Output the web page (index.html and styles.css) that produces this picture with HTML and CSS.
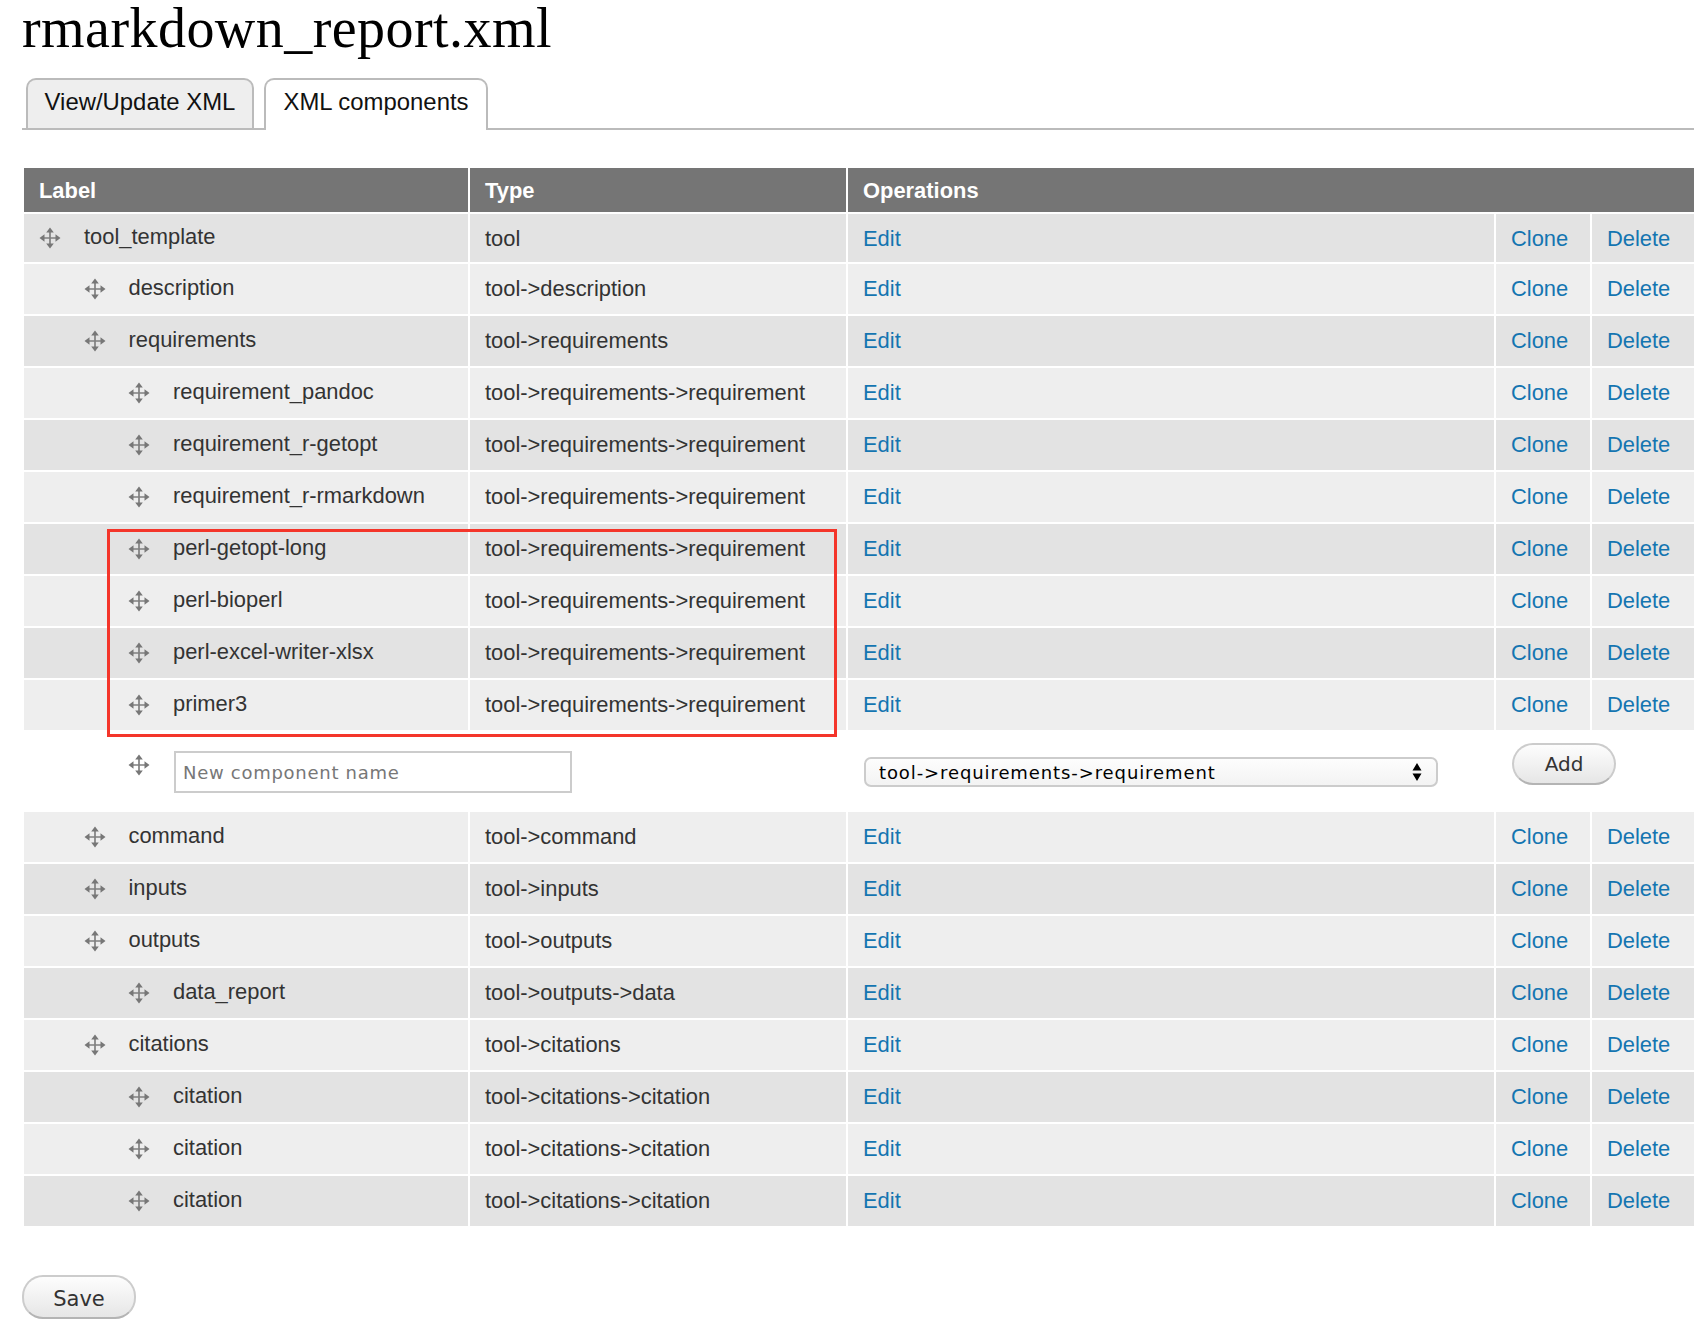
FILE: index.html
```html
<!DOCTYPE html>
<html lang="en">
<head>
  <meta charset="UTF-8" />
  <title>rmarkdown_report.xml</title>
  <link rel="stylesheet" href="styles.css">
</head>
<body>
  <svg class="defs" width="0" height="0">
    <symbol id="move" viewBox="0 0 22 22">
      <path d="M11 3v16M3 11h16" fill="none" stroke="#808080" stroke-width="1.7"/>
      <path d="M11 0.5l3.800 5h-7.600zM11 21.500l3.800-5h-7.600zM0.500 11l5-3.800v7.600zM21.500 11l-5-3.800v7.600z" fill="#777"/>
    </symbol>
  </svg>

  <h1>rmarkdown_report.xml</h1>

  <ul class="tabs">
    <li><a href="#">View/Update XML</a></li>
    <li class="active"><a href="#">XML components</a></li>
  </ul>

  <table class="components">
    <colgroup>
      <col class="col-label">
      <col class="col-type">
      <col>
      <col class="col-clone">
      <col class="col-delete">
    </colgroup>
    <thead>
      <tr><th>Label</th><th>Type</th><th colspan="3">Operations</th></tr>
    </thead>
    <tbody>
      <tr class="dark first">
        <td><div class="label"><svg class="move"><use href="#move"/></svg><span>tool_template</span></div></td>
        <td>tool</td><td><a href="#">Edit</a></td><td><a href="#">Clone</a></td><td><a href="#">Delete</a></td>
      </tr>
      <tr>
        <td><div class="label lvl1"><svg class="move"><use href="#move"/></svg><span>description</span></div></td>
        <td>tool-&gt;description</td><td><a href="#">Edit</a></td><td><a href="#">Clone</a></td><td><a href="#">Delete</a></td>
      </tr>
      <tr class="dark">
        <td><div class="label lvl1"><svg class="move"><use href="#move"/></svg><span>requirements</span></div></td>
        <td>tool-&gt;requirements</td><td><a href="#">Edit</a></td><td><a href="#">Clone</a></td><td><a href="#">Delete</a></td>
      </tr>
      <tr>
        <td><div class="label lvl2"><svg class="move"><use href="#move"/></svg><span>requirement_pandoc</span></div></td>
        <td>tool-&gt;requirements-&gt;requirement</td><td><a href="#">Edit</a></td><td><a href="#">Clone</a></td><td><a href="#">Delete</a></td>
      </tr>
      <tr class="dark">
        <td><div class="label lvl2"><svg class="move"><use href="#move"/></svg><span>requirement_r-getopt</span></div></td>
        <td>tool-&gt;requirements-&gt;requirement</td><td><a href="#">Edit</a></td><td><a href="#">Clone</a></td><td><a href="#">Delete</a></td>
      </tr>
      <tr>
        <td><div class="label lvl2"><svg class="move"><use href="#move"/></svg><span>requirement_r-rmarkdown</span></div></td>
        <td>tool-&gt;requirements-&gt;requirement</td><td><a href="#">Edit</a></td><td><a href="#">Clone</a></td><td><a href="#">Delete</a></td>
      </tr>
      <tr class="dark">
        <td><div class="label lvl2"><svg class="move"><use href="#move"/></svg><span>perl-getopt-long</span></div></td>
        <td>tool-&gt;requirements-&gt;requirement</td><td><a href="#">Edit</a></td><td><a href="#">Clone</a></td><td><a href="#">Delete</a></td>
      </tr>
      <tr>
        <td><div class="label lvl2"><svg class="move"><use href="#move"/></svg><span>perl-bioperl</span></div></td>
        <td>tool-&gt;requirements-&gt;requirement</td><td><a href="#">Edit</a></td><td><a href="#">Clone</a></td><td><a href="#">Delete</a></td>
      </tr>
      <tr class="dark">
        <td><div class="label lvl2"><svg class="move"><use href="#move"/></svg><span>perl-excel-writer-xlsx</span></div></td>
        <td>tool-&gt;requirements-&gt;requirement</td><td><a href="#">Edit</a></td><td><a href="#">Clone</a></td><td><a href="#">Delete</a></td>
      </tr>
      <tr>
        <td><div class="label lvl2"><svg class="move"><use href="#move"/></svg><span>primer3</span></div></td>
        <td>tool-&gt;requirements-&gt;requirement</td><td><a href="#">Edit</a></td><td><a href="#">Clone</a></td><td><a href="#">Delete</a></td>
      </tr>
      <tr class="add-row">
        <td colspan="2">
          <div class="label lvl2 add-label"><svg class="move"><use href="#move"/></svg><input type="text" placeholder="New component name"></div>
        </td>
        <td>
          <div class="select-wrap">
            <select><option>tool-&gt;requirements-&gt;requirement</option></select>
            <svg class="select-arrows" viewBox="0 0 10 18"><path d="M5 0l4.500 7.500h-9zM5 18l4.500-7.500h-9z"/></svg>
          </div>
        </td>
        <td colspan="2"><button class="btn btn-add">Add</button></td>
      </tr>
      <tr>
        <td><div class="label lvl1"><svg class="move"><use href="#move"/></svg><span>command</span></div></td>
        <td>tool-&gt;command</td><td><a href="#">Edit</a></td><td><a href="#">Clone</a></td><td><a href="#">Delete</a></td>
      </tr>
      <tr class="dark">
        <td><div class="label lvl1"><svg class="move"><use href="#move"/></svg><span>inputs</span></div></td>
        <td>tool-&gt;inputs</td><td><a href="#">Edit</a></td><td><a href="#">Clone</a></td><td><a href="#">Delete</a></td>
      </tr>
      <tr>
        <td><div class="label lvl1"><svg class="move"><use href="#move"/></svg><span>outputs</span></div></td>
        <td>tool-&gt;outputs</td><td><a href="#">Edit</a></td><td><a href="#">Clone</a></td><td><a href="#">Delete</a></td>
      </tr>
      <tr class="dark">
        <td><div class="label lvl2"><svg class="move"><use href="#move"/></svg><span>data_report</span></div></td>
        <td>tool-&gt;outputs-&gt;data</td><td><a href="#">Edit</a></td><td><a href="#">Clone</a></td><td><a href="#">Delete</a></td>
      </tr>
      <tr>
        <td><div class="label lvl1"><svg class="move"><use href="#move"/></svg><span>citations</span></div></td>
        <td>tool-&gt;citations</td><td><a href="#">Edit</a></td><td><a href="#">Clone</a></td><td><a href="#">Delete</a></td>
      </tr>
      <tr class="dark">
        <td><div class="label lvl2"><svg class="move"><use href="#move"/></svg><span>citation</span></div></td>
        <td>tool-&gt;citations-&gt;citation</td><td><a href="#">Edit</a></td><td><a href="#">Clone</a></td><td><a href="#">Delete</a></td>
      </tr>
      <tr>
        <td><div class="label lvl2"><svg class="move"><use href="#move"/></svg><span>citation</span></div></td>
        <td>tool-&gt;citations-&gt;citation</td><td><a href="#">Edit</a></td><td><a href="#">Clone</a></td><td><a href="#">Delete</a></td>
      </tr>
      <tr class="dark">
        <td><div class="label lvl2"><svg class="move"><use href="#move"/></svg><span>citation</span></div></td>
        <td>tool-&gt;citations-&gt;citation</td><td><a href="#">Edit</a></td><td><a href="#">Clone</a></td><td><a href="#">Delete</a></td>
      </tr>
    </tbody>
  </table>

  <div class="highlight"></div>

  <button class="btn btn-save">Save</button>
</body>
</html>
```

FILE: styles.css
```css
/* Base */
* {
  box-sizing: border-box;
}

html, body {
  margin: 0;
  padding: 0;
}

body {
  position: relative;
  height: 1328px;
  overflow: hidden;
  background: #fff;
  padding: 0 10px 0 22px;
  font-family: 'Liberation Sans', Arial, sans-serif;
  font-size: 21.900px;
  color: #333;
}

.defs {
  position: absolute;
}

h1 {
  margin: 0;
  height: 78px;
  font-family: 'Liberation Serif', serif;
  font-size: 56px;
  font-weight: normal;
  line-height: 57px;
  letter-spacing: 0.450px;
  color: #000;
}

/* Tabs */
.tabs {
  display: flex;
  gap: 10px;
  margin: 0 2px 0 0;
  padding: 0 0 0 4px;
  list-style: none;
  height: 52px;
  border-bottom: 2px solid #bbb;
}

.tabs li {
  height: 50px;
  width: 228px;
  background: #eee;
  border: 2px solid #bbb;
  border-bottom: none;
  border-radius: 10px 10px 0 0;
}

.tabs li.active {
  width: 224px;
  height: 52px;
  background: #fff;
}

.tabs a {
  display: block;
  padding-top: 7px;
  text-align: center;
  font-size: 23.900px;
  line-height: 30px;
  color: #111;
  text-decoration: none;
}

/* Table */
.components {
  width: 1674px;
  margin-top: 36px;
  table-layout: fixed;
  border-collapse: separate;
  border-spacing: 2px;
}

.col-label {
  width: 444px;
}

.col-type {
  width: 376px;
}

.col-clone {
  width: 94px;
}

.col-delete {
  width: 102px;
}

.components th {
  height: 44px;
  padding: 2px 15px 0;
  background: #757575;
  color: #fff;
  font-weight: bold;
  text-align: left;
}

.components td {
  height: 50px;
  padding: 0 15px;
  background: #eee;
  white-space: nowrap;
}

.components tr.dark td {
  background: #e3e3e3;
}

.components tr.first td {
  height: 48px;
  padding-top: 2px;
}

.components a {
  color: #1475b1;
  text-decoration: none;
}

/* Drag handle and nested label */
.label {
  display: flex;
  align-items: center;
  gap: 23px;
  margin-top: -2px;
}

.first .label {
  margin-top: -4px;
}

.lvl1 {
  padding-left: 44.500px;
}

.lvl2 {
  padding-left: 89px;
}

.move {
  flex: none;
  width: 22px;
  height: 22px;
  margin-top: 1px;
  filter: blur(0.5px);
}

/* Add row */
.components tr.add-row td {
  height: 78px;
  background: #fff;
  vertical-align: top;
}

.add-label {
  gap: 24px;
  margin-top: 19px;
  align-items: flex-start;
}

.add-label .move {
  margin-top: 3px;
}

.add-label input {
  width: 398px;
  height: 42px;
  padding: 0 7px;
  border: 2px solid #ccc;
  font-family: 'DejaVu Sans', sans-serif;
  font-size: 18px;
  letter-spacing: 0.720px;
  color: #333;
}

.add-label input::placeholder {
  color: #777;
  opacity: 1;
}

.select-wrap {
  position: relative;
  width: 574px;
  margin: 25px 0 0 1px;
}

.select-wrap select {
  display: block;
  width: 100%;
  height: 30px;
  padding: 0 13px;
  appearance: none;
  border: 2px solid #ccc;
  border-radius: 7px;
  background: linear-gradient(#fdfdfd, #f3f3f3);
  font-family: 'DejaVu Sans', sans-serif;
  font-size: 18px;
  letter-spacing: 0.900px;
  color: #000;
}

.select-arrows {
  position: absolute;
  top: 6px;
  right: 16px;
  width: 10px;
  height: 18px;
  fill: #000;
}

/* Buttons */
.btn {
  display: block;
  border: 2px solid #ccc;
  border-bottom-color: #b4b4b4;
  border-radius: 21px;
  background: linear-gradient(#fdfdfd, #e6e6e6);
  font-family: 'DejaVu Sans', sans-serif;
  font-size: 20px;
  color: #333;
}

.btn-add {
  width: 104px;
  height: 42px;
  margin: 11px 0 0 1px;
}

.btn-save {
  width: 114px;
  height: 44px;
  padding-top: 5px;
  margin-top: 47px;
  font-size: 21px;
}

/* Red box drawn over the table */
.highlight {
  position: absolute;
  left: 107px;
  top: 529px;
  width: 730px;
  height: 208px;
  border: 3px solid #f4352a;
}
```
